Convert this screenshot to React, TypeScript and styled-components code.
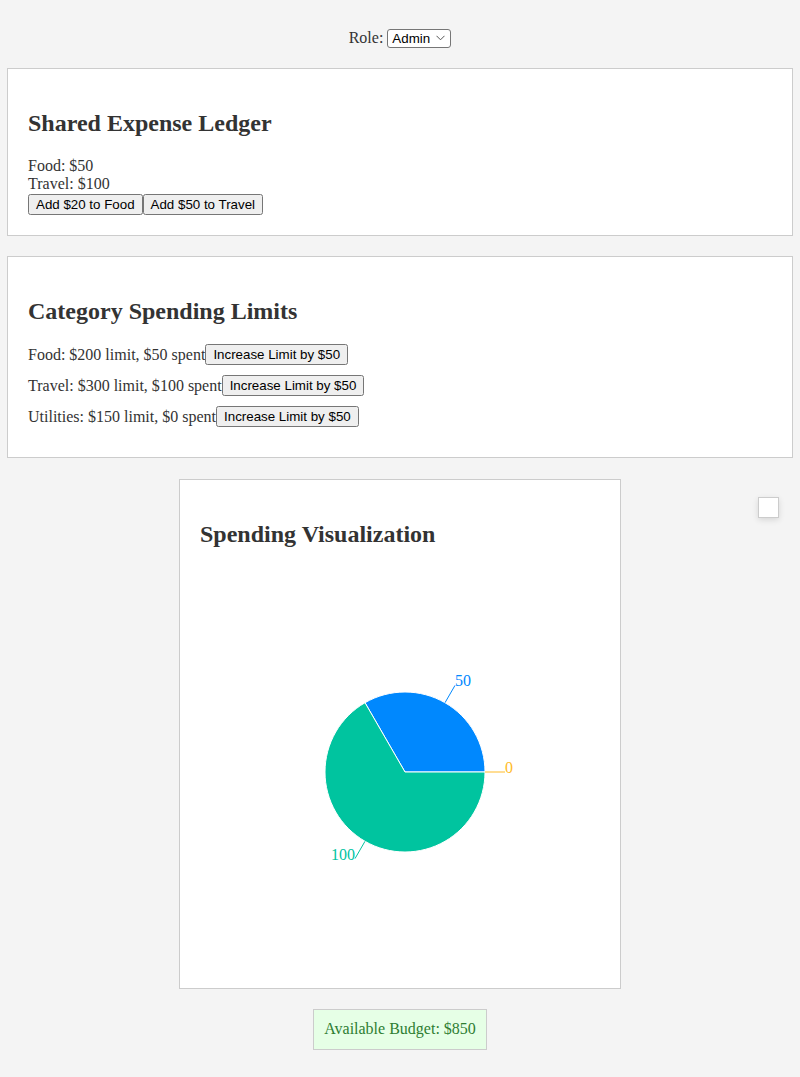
import React, { useState } from 'react'
import styled, { createGlobalStyle } from 'styled-components'

interface sliceInterface {
  name: string,
  value: number,
  color: string,
}

const GlobalStyle = createGlobalStyle`
  html, body {
    margin: 0;
    padding: 0;
    background: #f4f4f4;
    color: #333;
    font-family: "Liberation Serif", "Times New Roman", serif;
    font-size: 16px;
    line-height: 18.4px;
  }
`

const App: React.FC = () => {
  const [role, setRole] = useState('Admin')
  const [expenses, setExpenses] = useState({ Food: 50, Travel: 100 })
  const [limits, setLimits] = useState({ Food: 200, Travel: 300, Utilities: 150 })

  const spent: { [key: string]: number } = { Food: expenses.Food, Travel: expenses.Travel, Utilities: 0 }
  const slices: Array<sliceInterface> = [
    { name: 'Food', value: expenses.Food, color: '#0088FE' },
    { name: 'Travel', value: expenses.Travel, color: '#00C49F' },
    { name: 'Utilities', value: 0, color: '#FFBB28' },
  ]

  const budget = 1000 - expenses.Food - expenses.Travel

  return <>
    <GlobalStyle />
    <Page>
      <RoleBar>
        Role:
        <SelectWrap>
          <RoleSelect value={role} onChange={e => setRole(e.target.value)}>
            <option>Admin</option>
            <option>Member</option>
            <option>Viewer</option>
          </RoleSelect>
          <Chevron width='9' height='6' viewBox='0 0 9 6'>
            <path d='M0.5 0.8 L4.5 4.8 L8.5 0.8' fill='none' stroke='#555' strokeWidth='1' />
          </Chevron>
        </SelectWrap>
      </RoleBar>

      <Card>
        <Title>Shared Expense Ledger</Title>
        <div>Food: ${expenses.Food}</div>
        <div>Travel: ${expenses.Travel}</div>
        <ButtonRow>
          <Button onClick={() => setExpenses({ ...expenses, Food: expenses.Food + 20 })}>Add $20 to Food</Button>
          <Button onClick={() => setExpenses({ ...expenses, Travel: expenses.Travel + 50 })}>Add $50 to Travel</Button>
        </ButtonRow>
      </Card>

      <Card>
        <Title>Category Spending Limits</Title>
        {(Object.keys(limits) as Array<keyof typeof limits>).map(name => (
          <LimitRow key={name}>
            {name}: ${limits[name]} limit, ${spent[name]} spent
            <Button onClick={() => setLimits({ ...limits, [name]: limits[name] + 50 })}>Increase Limit by $50</Button>
          </LimitRow>
        ))}
      </Card>

      <ChartCard>
        <Title>Spending Visualization</Title>
        <PieChart slices={slices} />
      </ChartCard>

      <BudgetWrap>
        <BudgetBox>Available Budget: ${budget}</BudgetBox>
      </BudgetWrap>

      <CornerBox />
    </Page>
  </>
}

const PieChart: React.FC<{ slices: Array<sliceInterface> }> = ({ slices }) => {
  const cx = 205
  const cy = 204
  const r = 80
  const total = slices.reduce((s, v) => s + v.value, 0)
  const rad = Math.PI / 180
  const pt = (angle: number, radius: number) => [cx + radius * Math.cos(angle * rad), cy - radius * Math.sin(angle * rad)]

  let start = 0
  const parts = slices.map(slice => {
    const sweep = total ? (slice.value / total) * 360 : 0
    const end = start + sweep
    const mid = start + sweep / 2
    const [x1, y1] = pt(start, r)
    const [x2, y2] = pt(end, r)
    const large = sweep > 180 ? 1 : 0
    const d = sweep > 0 ? `M${cx},${cy} L${x1},${y1} A${r},${r} 0 ${large} 0 ${x2},${y2} Z` : ''
    const [lx1, ly1] = pt(mid, r)
    const [lx2, ly2] = pt(mid, r + 20)
    const anchor = Math.cos(mid * rad) >= 0 ? 'start' : 'end'
    start = end
    return { slice, d, lx1, ly1, lx2, ly2, anchor }
  })

  return <ChartArea>
    <svg width='400' height='400' viewBox='0 0 400 400'>
      {parts.map(p => p.d && <path key={p.slice.name} d={p.d} fill={p.slice.color} stroke='#fff' />)}
      {parts.map(p => (
        <g key={p.slice.name + '-label'}>
          <path d={`M${p.lx1},${p.ly1} L${p.lx2},${p.ly2}`} stroke={p.slice.color} fill='none' />
          <text x={p.lx2} y={p.ly2 + 1} fill={p.slice.color} textAnchor={p.anchor}>
            {p.slice.value}
          </text>
        </g>
      ))}
    </svg>
  </ChartArea>
}

const Page = styled.div`
  position: relative;
  padding: 28px 7px 20px;
`

const RoleBar = styled.div`
  display: flex;
  justify-content: center;
  align-items: center;
  gap: 4px;
  height: 20px;
  margin-bottom: 20px;
`

const SelectWrap = styled.span`
  position: relative;
  display: inline-flex;
`

const RoleSelect = styled.select`
  appearance: none;
  -webkit-appearance: none;
  width: 64px;
  height: 19px;
  margin: 0;
  padding: 0 0 0 4px;
  border: 1px solid #767676;
  border-radius: 3px;
  background: #fff;
  color: #000;
  font-family: "Liberation Sans", Arial, sans-serif;
  font-size: 13.33px;
  line-height: 17px;
`

const Chevron = styled.svg`
  position: absolute;
  right: 6px;
  top: 6px;
  pointer-events: none;
`

const Card = styled.div`
  background: #fff;
  border: 1px solid #ccc;
  padding: 20px;
  margin-bottom: 20px;
`

const ChartCard = styled(Card)`
  width: 400px;
  margin: 0 auto;
  margin-top: 21px;
`

const Title = styled.h2`
  font-size: 24px;
  font-weight: bold;
  margin: 19.92px 0;
  line-height: 28px;
`

const ButtonRow = styled.div`
  display: flex;
`

const Button = styled.button`
  font-family: "Liberation Sans", Arial, sans-serif;
  font-size: 13.33px;
  height: 21px;
  padding: 1px 6px;
`

const LimitRow = styled.div`
  display: flex;
  align-items: center;
  height: 21px;
  margin: 10px 0;
`

const ChartArea = styled.div`
  width: 400px;
  height: 400px;
`

const BudgetWrap = styled.div`
  display: flex;
  justify-content: center;
  margin-top: 20px;
`

const BudgetBox = styled.div`
  background: #e6ffe6;
  border: 1px solid #ccc;
  color: #2e7d32;
  padding: 10px;
  line-height: 18.4px;
`

const CornerBox = styled.div`
  position: absolute;
  top: 497px;
  right: 21px;
  width: 19px;
  height: 19px;
  background: #fff;
  border: 1px solid #ccc;
  box-shadow: 0 2px 6px rgba(0, 0, 0, 0.12);
`

export default App
